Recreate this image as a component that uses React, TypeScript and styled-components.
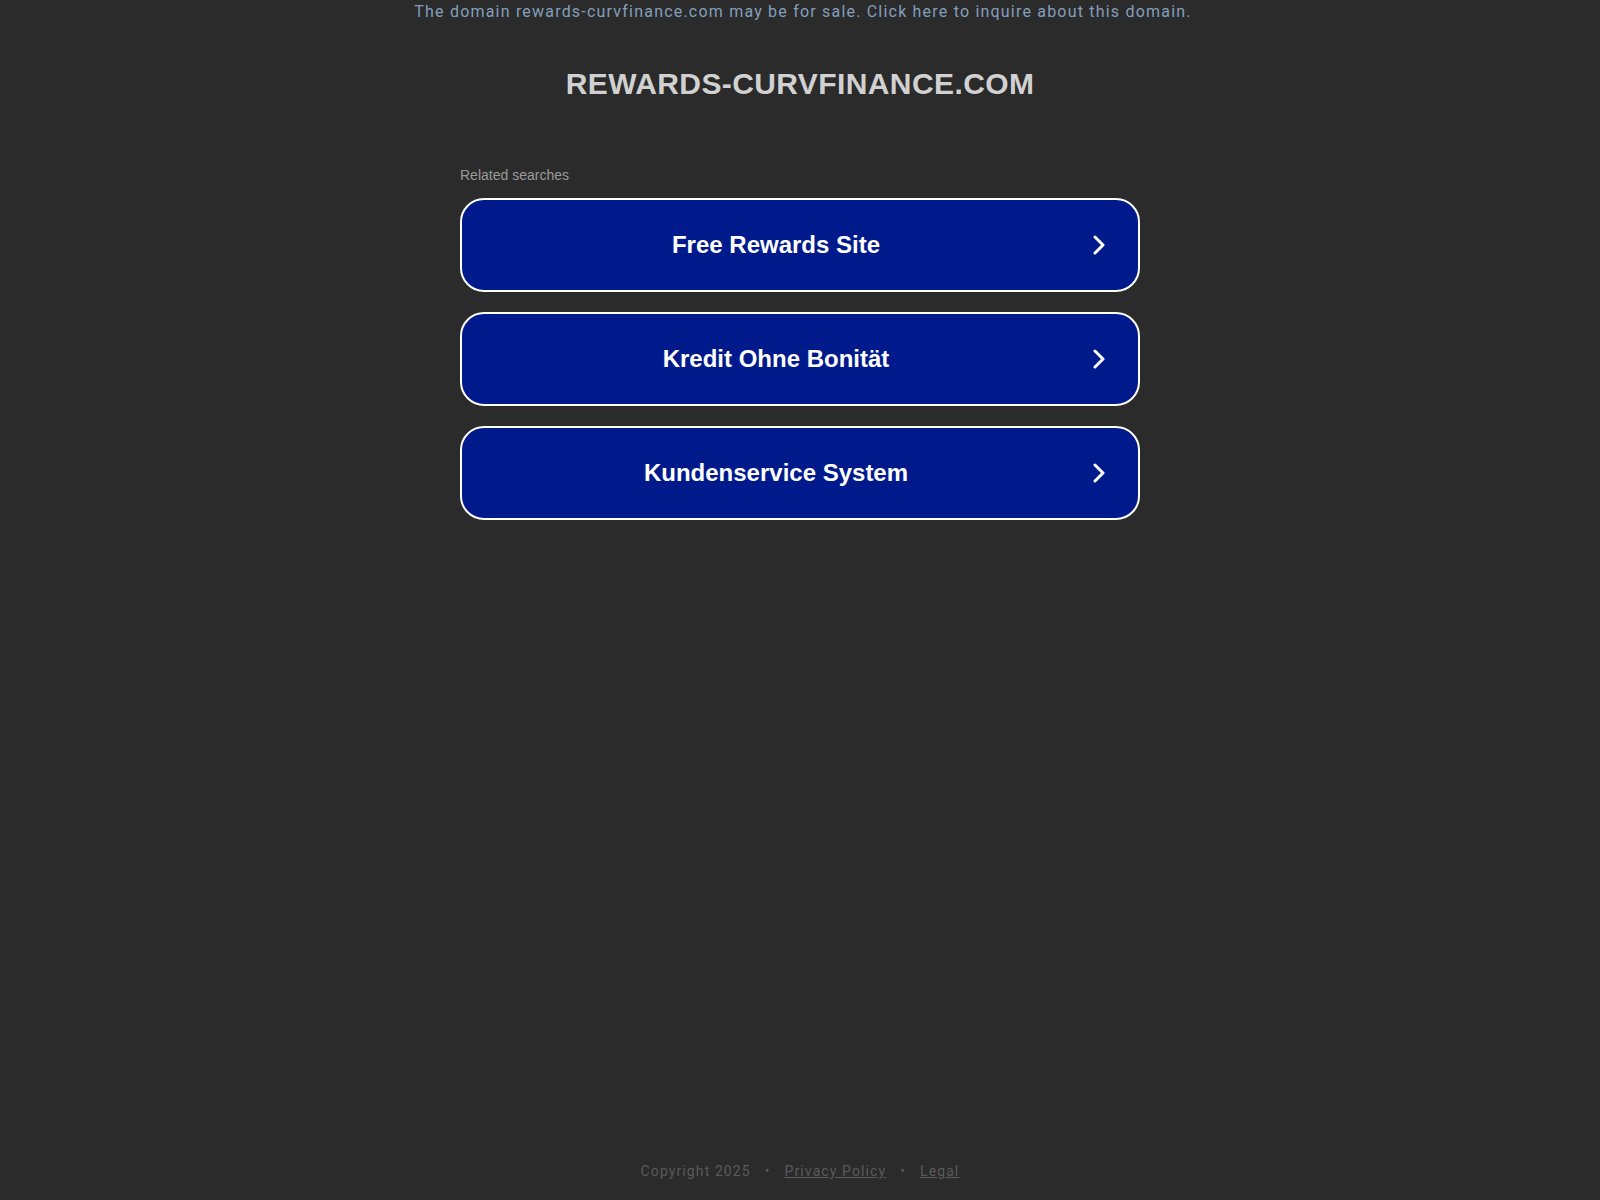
import React from 'react';
import styled, { createGlobalStyle } from 'styled-components';

const GlobalStyle = createGlobalStyle`
  html, body {
    margin: 0;
    padding: 0;
    background: #2b2b2b;
  }
`;

const Page = styled.div`
  min-height: 100vh;
  display: flex;
  flex-direction: column;
  align-items: center;
`;

const SaleBanner = styled.a`
  display: block;
  box-sizing: border-box;
  width: 100%;
  padding: 3px 0 1px 6px;
  text-align: center;
  font-family: Roboto, "Liberation Sans", sans-serif;
  font-size: 16px;
  line-height: 18px;
  letter-spacing: 1.2px;
  color: #839fbc;
  text-decoration: none;
  cursor: pointer;
`;

const DomainTitle = styled.h1`
  margin: 42px 0 0;
  font-family: "Liberation Sans", Arial, sans-serif;
  font-size: 30px;
  line-height: 40px;
  font-weight: 700;
  letter-spacing: 0.4px;
  color: #d1d1d1;
`;

const Searches = styled.div`
  width: 680px;
  margin-top: 63px;
  display: flex;
  flex-direction: column;
`;

const Label = styled.div`
  font-family: "Liberation Sans", Arial, sans-serif;
  font-size: 14px;
  line-height: 16px;
  color: #9a9a9a;
  margin-bottom: 15px;
`;

const List = styled.div`
  display: flex;
  flex-direction: column;
  gap: 20px;
`;

const SearchButton = styled.a`
  position: relative;
  height: 94px;
  box-sizing: border-box;
  display: flex;
  align-items: center;
  justify-content: center;
  padding-right: 48px;
  background: #011a8b;
  border: 2px solid #ffffff;
  border-radius: 24px;
  font-family: "Liberation Sans", Arial, sans-serif;
  font-size: 24px;
  font-weight: 700;
  color: #ffffff;
  text-decoration: none;
  cursor: pointer;
`;

const Chevron = styled.svg`
  position: absolute;
  right: 32px;
  top: 50%;
  width: 14px;
  height: 20px;
  margin-top: -10px;
`;

const Footer = styled.footer`
  margin-top: auto;
  padding-bottom: 20px;
  font-family: Roboto, "Liberation Sans", sans-serif;
  font-size: 14px;
  line-height: 18px;
  letter-spacing: 1.1px;
  color: #5a5a5a;
  display: flex;
  gap: 14px;
`;

const FooterLink = styled.a`
  color: #5a5a5a;
  text-decoration: underline;
  cursor: pointer;
`;

const searches = ['Free Rewards Site', 'Kredit Ohne Bonität', 'Kundenservice System'];

const App: React.FC = () => {
  return (
    <>
      <GlobalStyle />
      <Page>
        <SaleBanner>
          The domain rewards-curvfinance.com may be for sale. Click here to inquire about this domain.
        </SaleBanner>
        <DomainTitle>REWARDS-CURVFINANCE.COM</DomainTitle>
        <Searches>
          <Label>Related searches</Label>
          <List>
            {searches.map((s) => (
              <SearchButton key={s}>
                {s}
                <Chevron viewBox="0 0 14 20">
                  <path d="M3 2 L11 10 L3 18" fill="none" stroke="#fff" strokeWidth="3" strokeLinecap="round" strokeLinejoin="round" />
                </Chevron>
              </SearchButton>
            ))}
          </List>
        </Searches>
        <Footer>
          <span>Copyright 2025</span>
          <span>•</span>
          <FooterLink>Privacy Policy</FooterLink>
          <span>•</span>
          <FooterLink>Legal</FooterLink>
        </Footer>
      </Page>
    </>
  );
};

export default App;
